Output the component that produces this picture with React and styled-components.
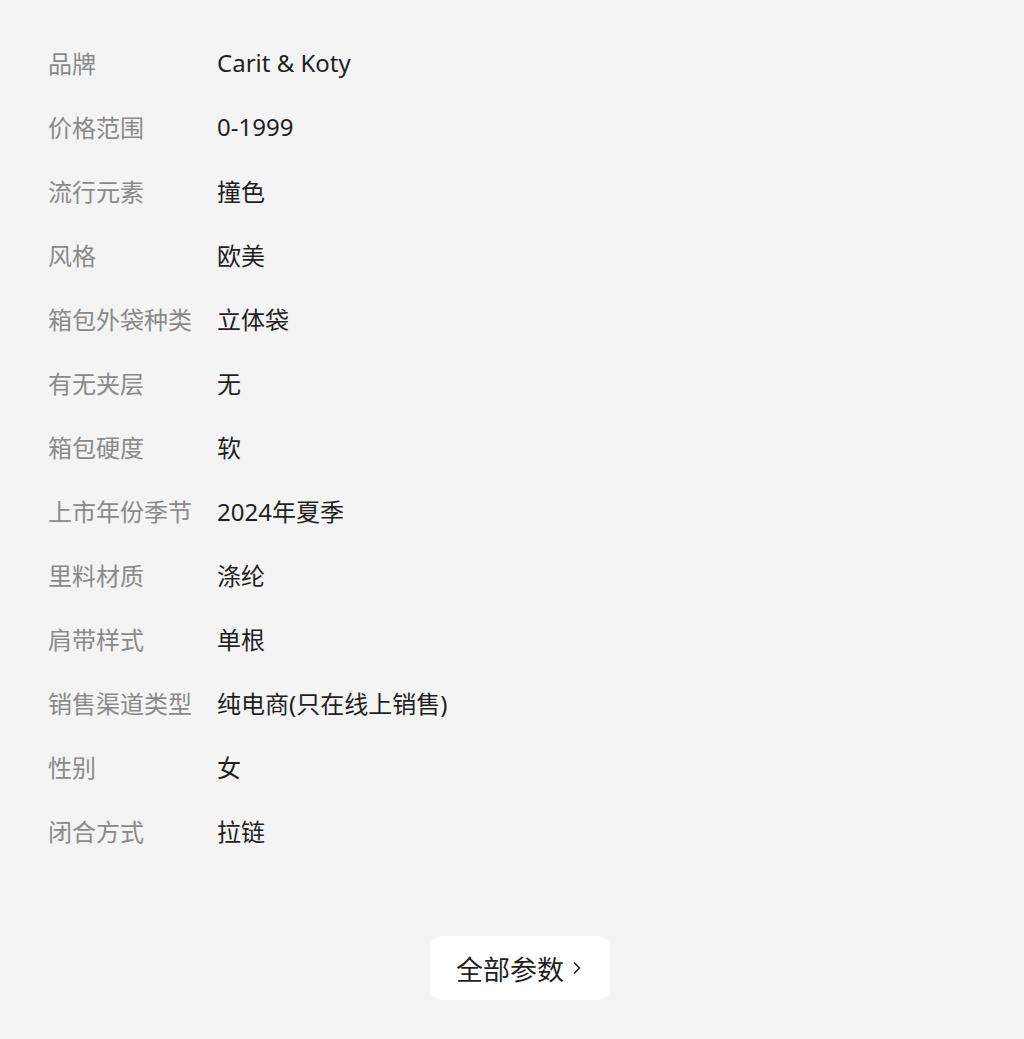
import React from 'react'
import styled, { createGlobalStyle } from 'styled-components'

const GlobalStyle = createGlobalStyle`
  html, body {
    margin: 0;
    padding: 0;
    background: #f4f4f4;
  }
  body {
    font-family: "Noto Sans", "Noto Sans CJK SC", sans-serif;
  }
`

const Page = styled.div`
  width: 1024px;
  min-height: 1039px;
  background: #f4f4f4;
  display: flex;
  flex-direction: column;
  padding: 30px 0 0 48px;
  box-sizing: border-box;
`

const ParamList = styled.div`
  display: flex;
  flex-direction: column;
`

const Row = styled.div`
  display: flex;
  flex-direction: row;
  align-items: center;
  height: 64px;
  font-size: 24px;
`

const Label = styled.div`
  width: 169px;
  flex-shrink: 0;
  color: #8a8a8a;
  white-space: nowrap;
`

const Value = styled.div`
  color: #1f1f1f;
  white-space: nowrap;
`

const Footer = styled.div`
  display: flex;
  justify-content: center;
  margin-top: 74px;
  padding-right: 32px;
`

const MoreButton = styled.button`
  width: 180px;
  height: 64px;
  border: none;
  border-radius: 12px;
  background: #ffffff;
  color: #1f1f1f;
  font-family: "Noto Sans", "Noto Sans CJK SC", sans-serif;
  font-size: 27px;
  display: flex;
  align-items: center;
  justify-content: center;
  gap: 6px;
  padding: 0;
  cursor: pointer;
  svg {
    width: 14px;
    height: 14px;
  }
`

const params = [
  ['品牌', 'Carit & Koty'],
  ['价格范围', '0-1999'],
  ['流行元素', '撞色'],
  ['风格', '欧美'],
  ['箱包外袋种类', '立体袋'],
  ['有无夹层', '无'],
  ['箱包硬度', '软'],
  ['上市年份季节', '2024年夏季'],
  ['里料材质', '涤纶'],
  ['肩带样式', '单根'],
  ['销售渠道类型', '纯电商(只在线上销售)'],
  ['性别', '女'],
  ['闭合方式', '拉链'],
]

const App = () => {
  return (
    <Page>
      <GlobalStyle />
      <ParamList>
        {params.map(([label, value]) => (
          <Row key={label}>
            <Label>{label}</Label>
            <Value>{value}</Value>
          </Row>
        ))}
      </ParamList>
      <Footer>
        <MoreButton>
          全部参数
          <svg viewBox="0 0 14 14" fill="none" stroke="#1f1f1f" strokeWidth="1.6" strokeLinecap="round" strokeLinejoin="round">
            <path d="M4.5 2 L9.5 7 L4.5 12" />
          </svg>
        </MoreButton>
      </Footer>
    </Page>
  )
}

export default App
